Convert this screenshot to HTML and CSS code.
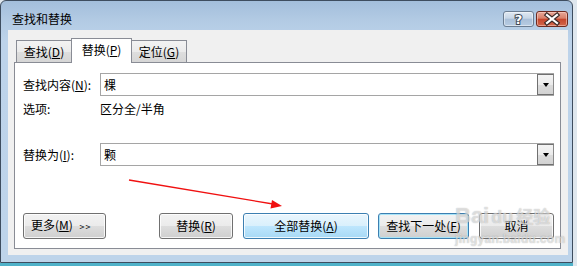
FILE: index.html
```html
<!DOCTYPE html>
<html lang="zh-CN">
<head>
    <meta charset="UTF-8">
    <title>查找和替换</title>
    <link rel="stylesheet" href="styles.css">
</head>
<body>
    <div class="window">
        <div class="titlebar">
            <span class="title">查找和替换</span>
            <div class="caption-btns">
                <div class="cap help">
                    <svg width="29" height="14" viewBox="0 0 29 14">
                        <text x="14.5" y="12" text-anchor="middle" class="cap-glyph">?</text>
                    </svg>
                </div>
                <div class="cap close">
                    <svg width="30" height="14" viewBox="0 0 30 14">
                        <path d="M10 3 L20 11 M20 3 L10 11" stroke="#3b2a28" stroke-width="4.5" stroke-linecap="square"/>
                        <path d="M10 3 L20 11 M20 3 L10 11" stroke="#fff" stroke-width="2.2" stroke-linecap="square"/>
                    </svg>
                </div>
            </div>
        </div>

        <div class="client">
            <div class="tabs">
                <div class="tab">查找(<u>D</u>)</div>
                <div class="tab active">替换(<u>P</u>)</div>
                <div class="tab">定位(<u>G</u>)</div>
            </div>

            <div class="panel">
                <div class="row">
                    <label class="lbl">查找内容(<u>N</u>):</label>
                    <div class="combo">
                        <span class="combo-text">棵</span>
                        <span class="drop"><i></i></span>
                    </div>
                </div>
                <div class="row opt">
                    <span class="lbl">选项:</span>
                    <span>区分全/半角</span>
                </div>
                <div class="row replace-row">
                    <label class="lbl">替换为(<u>I</u>):</label>
                    <div class="combo">
                        <span class="combo-text">颗</span>
                        <span class="drop"><i></i></span>
                    </div>
                </div>

                <div class="buttons">
                    <button class="btn more">更多(<u>M</u>) <span class="chev">&gt;&gt;</span></button>
                    <div class="btn-group">
                        <button class="btn w-replace">替换(<u>R</u>)</button>
                        <button class="btn hot w-all">全部替换(<u>A</u>)</button>
                        <button class="btn default w-next">查找下一处(<u>F</u>)</button>
                        <button class="btn w-cancel">取消</button>
                    </div>
                </div>
            </div>
        </div>
    </div>

    <!-- 标注箭头 -->
    <svg class="arrow" width="577" height="266" viewBox="0 0 577 266">
        <line x1="129" y1="180" x2="273" y2="204" stroke="#f01010" stroke-width="1.3"/>
        <polygon points="282,206 270.5,208.5 272,200" fill="#f01010"/>
    </svg>

    <div class="watermark">
        <div class="wm-logo">Bai<span class="wm-du">du</span><span class="wm-cn">经验</span></div>
        <div class="wm-url">jingyan.baidu.com</div>
    </div>
</body>
</html>
```

FILE: styles.css
```css
* {
    margin: 0;
    padding: 0;
    box-sizing: border-box;
}

html, body {
    width: 100%;
    height: 100%;
    overflow: hidden;
}

body {
    background: #dfe7ee;
    font-family: "Noto Sans CJK SC", "Microsoft YaHei", sans-serif;
    font-size: 12px;
    color: #000;
    position: relative;
}

u {
    text-decoration: underline;
    text-underline-offset: 1px;
}

.window {
    width: 573px;
    height: 263px;
    border: 1px solid #3e4d5f;
    border-radius: 6px 6px 0 0;
    background: linear-gradient(#a3bedb 0px, #b3cbe4 20px, #bdd3ea 40px, #bed4ea 100%);
    display: flex;
    flex-direction: column;
    box-shadow: 0 3px 0 #4fb2c9;
}

.titlebar {
    height: 29px;
    display: flex;
    justify-content: space-between;
    align-items: flex-start;
    padding: 0 4px 0 11px;
    flex-shrink: 0;
}

.title {
    margin-top: 9px;
    line-height: 17px;
    color: #000;
}

.caption-btns {
    display: flex;
    gap: 2px;
    margin-top: 10px;
}

.cap {
    height: 16px;
    border-radius: 3px;
    display: flex;
    align-items: center;
    justify-content: center;
}

.help {
    width: 31px;
    border: 1px solid #6b7d92;
    background: linear-gradient(#dfe8f2 0%, #c7d6e6 45%, #a9bfd8 50%, #b7cce3 100%);
    box-shadow: inset 0 0 0 1px rgba(255, 255, 255, 0.45);
}

.cap-glyph {
    font-family: "DejaVu Sans", sans-serif;
    font-weight: bold;
    font-size: 13px;
    fill: #fff;
    stroke: #3d4856;
    stroke-width: 2px;
    paint-order: stroke;
}

.close {
    width: 32px;
    border: 1px solid #6e2a20;
    background: linear-gradient(#e7a899 0%, #d9806a 45%, #c5452c 50%, #d2674c 100%);
    box-shadow: inset 0 0 0 1px rgba(255, 220, 210, 0.5);
}

.client {
    flex: 1;
    margin: 0 4px 7px 7px;
    background: #f0f0f0;
    padding: 8px 7px 6px 6px;
    display: flex;
    flex-direction: column;
}

.tabs {
    height: 24px;
    display: flex;
    align-items: flex-end;
    padding-left: 2px;
    position: relative;
    z-index: 1;
}

.tab {
    width: 56px;
    height: 22px;
    border: 1px solid #898c95;
    border-bottom: none;
    background: linear-gradient(#f3f3f3 0%, #ebebeb 50%, #dedede 51%, #d6d6d6 100%);
    display: flex;
    align-items: center;
    justify-content: center;
    line-height: 16px;
    margin-left: -1px;
}

.tab:first-child {
    margin-left: 0;
}

.tab.active {
    width: 61px;
    height: 25px;
    margin-bottom: -1px;
    background: #fff;
    padding-bottom: 2px;
    position: relative;
    z-index: 2;
}

.panel {
    width: 547px;
    height: 187px;
    border: 1px solid #898c95;
    background: #fff;
    padding: 10px 6px 9px 8px;
    display: flex;
    flex-direction: column;
}

.row {
    display: flex;
    align-items: center;
    height: 23px;
}

.lbl {
    width: 77px;
    flex-shrink: 0;
    line-height: 16px;
}

.row.opt {
    height: 16px;
    margin-top: 5px;
    line-height: 16px;
}

.replace-row {
    margin-top: 26px;
}

.combo {
    flex: 1;
    height: 23px;
    border: 1px solid #a5a5a5;
    display: flex;
    align-items: center;
    justify-content: space-between;
}

.combo-text {
    padding-left: 3px;
    line-height: 16px;
}

.drop {
    width: 17px;
    height: 21px;
    border: 1px solid #707070;
    border-right-color: #8a8a8a;
    background: linear-gradient(#f4f4f4 0%, #ebebeb 50%, #dcdcdc 51%, #d2d2d2 100%);
    display: flex;
    align-items: center;
    justify-content: center;
    margin-right: -1px;
}

.drop i {
    width: 0;
    height: 0;
    border-left: 3.5px solid transparent;
    border-right: 3.5px solid transparent;
    border-top: 4px solid #000;
}

.buttons {
    margin-top: 47px;
    display: flex;
    justify-content: space-between;
}

.btn-group {
    display: flex;
    gap: 10px;
}

.btn {
    height: 26px;
    font-family: inherit;
    font-size: 12px;
    line-height: 16px;
    color: #000;
    border: 1px solid #707070;
    border-radius: 3px;
    background: linear-gradient(#f2f2f2 0%, #ebebeb 50%, #dddddd 51%, #cfcfcf 100%);
    box-shadow: inset 0 0 0 1px rgba(255, 255, 255, 0.8);
}

.more {
    width: 83px;
    text-align: left;
    padding-left: 7px;
}

.chev {
    font-size: 9px;
    margin-left: 4px;
    letter-spacing: 1px;
}

.w-replace { width: 74px; }
.w-all { width: 126px; margin-right: -1px; }
.w-next { width: 91px; }
.w-cancel { width: 75px; }

.btn.hot {
    border-color: #3c7fb1;
    background: linear-gradient(#eaf6fd 0%, #d9f0fc 50%, #bee6fd 51%, #a7d9f5 100%);
}

.btn.default {
    border-color: #3c7fb1;
    box-shadow: inset 0 0 0 1px #a8e4f8;
}

.arrow {
    position: absolute;
    left: 0;
    top: 0;
    pointer-events: none;
}

.watermark {
    position: absolute;
    left: 455px;
    top: 203px;
    width: 108px;
    pointer-events: none;
    color: rgba(255, 255, 255, 0.55);
    text-shadow: 0 0 1px rgba(80, 80, 80, 0.45);
    font-family: "Liberation Sans", sans-serif;
}

.wm-logo {
    font-size: 22px;
    font-weight: bold;
    line-height: 26px;
    white-space: nowrap;
}

.wm-du {
    font-size: 18px;
    margin-left: 2px;
}

.wm-cn {
    font-family: "Noto Sans CJK SC", sans-serif;
    font-size: 17px;
    margin-left: 3px;
}

.wm-url {
    font-size: 12px;
    font-weight: bold;
    line-height: 14px;
    letter-spacing: 0.3px;
    margin-top: 2px;
}
```
